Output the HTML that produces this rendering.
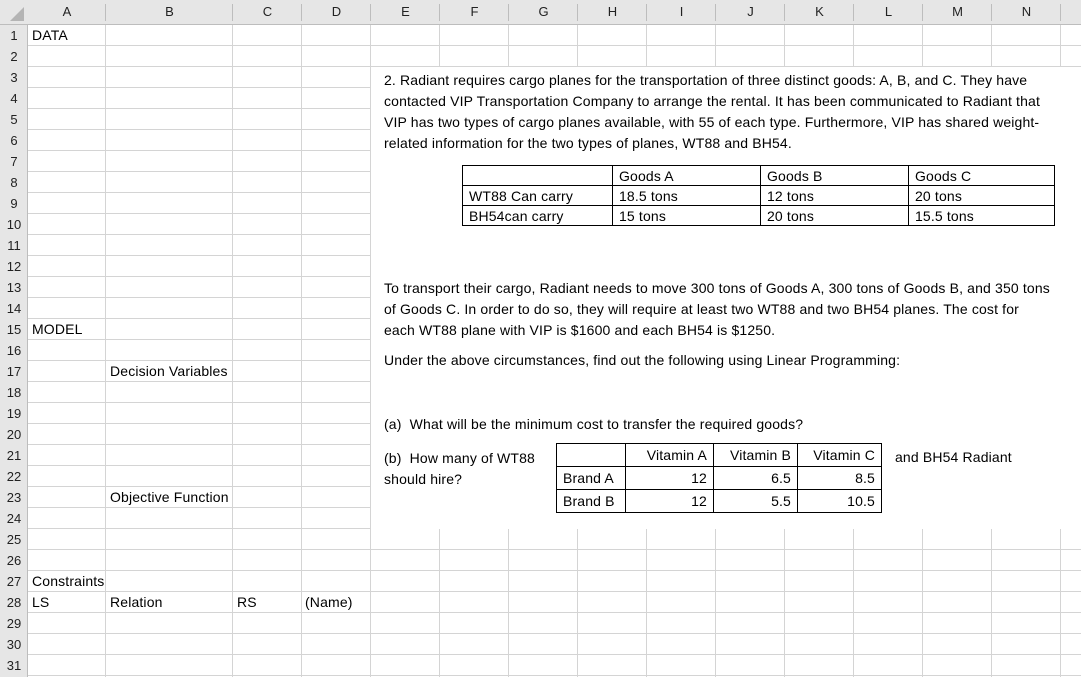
<!DOCTYPE html>
<html><head><style>
*{margin:0;padding:0;box-sizing:border-box}
body{width:1081px;height:677px;overflow:hidden;background:#fff;font-family:"Liberation Sans",Arial,sans-serif;font-size:14px;letter-spacing:0.15px;color:#000;position:relative}
.a{position:absolute;white-space:nowrap}
.v{position:absolute;top:0;width:1px;height:677px;background:#d4d4d4}
.hdr{position:absolute;left:0;top:0;width:1081px;height:25px;background:#e6e6e6;border-bottom:1px solid #bdbdbd}
.rh{position:absolute;left:0;top:25px;width:28px;height:652px;background:#e6e6e6;border-right:1px solid #bdbdbd}
.ch{position:absolute;top:4px;font-size:13px;letter-spacing:0;color:#222;text-align:center}
.rn{position:absolute;left:0;width:28px;text-align:center;font-size:13px;letter-spacing:0;color:#222}
.grid{position:absolute;left:28px;top:25px;width:1053px;height:652px;background:repeating-linear-gradient(to bottom,transparent 0 20px,#d4d4d4 20px 21px)}
table{position:absolute;border-collapse:collapse;font-size:14px}
td{border:1px solid #000;padding:0 6px;height:20px;line-height:18px}
.t2 td{height:23px}
.r{text-align:right}
.c{top:27px}
</style></head><body>
<div class="grid"></div>
<div class="v" style="left:105px"></div>
<div class="v" style="left:232px"></div>
<div class="v" style="left:301px"></div>
<div class="v" style="left:370px"></div>
<div class="v" style="left:439px"></div>
<div class="v" style="left:508px"></div>
<div class="v" style="left:577px"></div>
<div class="v" style="left:646px"></div>
<div class="v" style="left:715px"></div>
<div class="v" style="left:784px"></div>
<div class="v" style="left:853px"></div>
<div class="v" style="left:922px"></div>
<div class="v" style="left:991px"></div>
<div class="v" style="left:1060px"></div>
<div class="hdr"></div>
<svg class="a" style="left:0;top:0" width="28" height="25"><polygon points="24,7 24,21 10,21" fill="#b4b4b4"/></svg>
<div class="a" style="left:105px;top:4px;width:1px;height:17px;background:#bdbdbd"></div>
<div class="a" style="left:232px;top:4px;width:1px;height:17px;background:#bdbdbd"></div>
<div class="a" style="left:301px;top:4px;width:1px;height:17px;background:#bdbdbd"></div>
<div class="a" style="left:370px;top:4px;width:1px;height:17px;background:#bdbdbd"></div>
<div class="a" style="left:439px;top:4px;width:1px;height:17px;background:#bdbdbd"></div>
<div class="a" style="left:508px;top:4px;width:1px;height:17px;background:#bdbdbd"></div>
<div class="a" style="left:577px;top:4px;width:1px;height:17px;background:#bdbdbd"></div>
<div class="a" style="left:646px;top:4px;width:1px;height:17px;background:#bdbdbd"></div>
<div class="a" style="left:715px;top:4px;width:1px;height:17px;background:#bdbdbd"></div>
<div class="a" style="left:784px;top:4px;width:1px;height:17px;background:#bdbdbd"></div>
<div class="a" style="left:853px;top:4px;width:1px;height:17px;background:#bdbdbd"></div>
<div class="a" style="left:922px;top:4px;width:1px;height:17px;background:#bdbdbd"></div>
<div class="a" style="left:991px;top:4px;width:1px;height:17px;background:#bdbdbd"></div>
<div class="a" style="left:1060px;top:4px;width:1px;height:17px;background:#bdbdbd"></div>
<div class="ch" style="left:28px;width:78px">A</div>
<div class="ch" style="left:106px;width:127px">B</div>
<div class="ch" style="left:233px;width:69px">C</div>
<div class="ch" style="left:302px;width:69px">D</div>
<div class="ch" style="left:371px;width:69px">E</div>
<div class="ch" style="left:440px;width:69px">F</div>
<div class="ch" style="left:509px;width:69px">G</div>
<div class="ch" style="left:578px;width:69px">H</div>
<div class="ch" style="left:647px;width:69px">I</div>
<div class="ch" style="left:716px;width:69px">J</div>
<div class="ch" style="left:785px;width:69px">K</div>
<div class="ch" style="left:854px;width:69px">L</div>
<div class="ch" style="left:923px;width:69px">M</div>
<div class="ch" style="left:992px;width:69px">N</div>
<div class="rh"></div>
<div class="rn" style="top:28px">1</div><div class="rn" style="top:49px">2</div><div class="rn" style="top:70px">3</div><div class="rn" style="top:91px">4</div><div class="rn" style="top:112px">5</div><div class="rn" style="top:133px">6</div><div class="rn" style="top:154px">7</div><div class="rn" style="top:175px">8</div><div class="rn" style="top:196px">9</div><div class="rn" style="top:217px">10</div><div class="rn" style="top:238px">11</div><div class="rn" style="top:259px">12</div><div class="rn" style="top:280px">13</div><div class="rn" style="top:301px">14</div><div class="rn" style="top:322px">15</div><div class="rn" style="top:343px">16</div><div class="rn" style="top:364px">17</div><div class="rn" style="top:385px">18</div><div class="rn" style="top:406px">19</div><div class="rn" style="top:427px">20</div><div class="rn" style="top:448px">21</div><div class="rn" style="top:469px">22</div><div class="rn" style="top:490px">23</div><div class="rn" style="top:511px">24</div><div class="rn" style="top:532px">25</div><div class="rn" style="top:553px">26</div><div class="rn" style="top:574px">27</div><div class="rn" style="top:595px">28</div><div class="rn" style="top:616px">29</div><div class="rn" style="top:637px">30</div><div class="rn" style="top:658px">31</div>
<div class="a" style="left:32px;top:27px">DATA</div>
<div class="a" style="left:32px;top:321px">MODEL</div>
<div class="a" style="left:110px;top:363px">Decision Variables</div>
<div class="a" style="left:110px;top:489px">Objective Function</div>
<div class="a" style="left:32px;top:573px">Constraints</div>
<div class="a" style="left:32px;top:594px">LS</div>
<div class="a" style="left:110px;top:594px">Relation</div>
<div class="a" style="left:237px;top:594px">RS</div>
<div class="a" style="left:305px;top:594px">(Name)</div>
<div class="a" style="left:371px;top:67px;width:710px;height:462px;background:#fff"></div>
<div class="a" style="left:384px;top:70px;line-height:21px">2. Radiant requires cargo planes for the transportation of three distinct goods: A, B, and C. They have<br>contacted VIP Transportation Company to arrange the rental. It has been communicated to Radiant that<br>VIP has two types of cargo planes available, with 55 of each type. Furthermore, VIP has shared weight-<br>related information for the two types of planes, WT88 and BH54.</div>
<table style="left:462px;top:165px;width:593px">
<tr><td style="width:150px"></td><td style="width:148px">Goods A</td><td style="width:148px">Goods B</td><td>Goods C</td></tr>
<tr><td>WT88 Can carry</td><td>18.5 tons</td><td>12 tons</td><td>20 tons</td></tr>
<tr><td>BH54can carry</td><td>15 tons</td><td>20 tons</td><td>15.5 tons</td></tr>
</table>
<div class="a" style="left:384px;top:278px;line-height:21px">To transport their cargo, Radiant needs to move 300 tons of Goods A, 300 tons of Goods B, and 350 tons<br>of Goods C. In order to do so, they will require at least two WT88 and two BH54 planes. The cost for<br>each WT88 plane with VIP is $1600 and each BH54 is $1250.</div>
<div class="a" style="left:384px;top:352px">Under the above circumstances, find out the following using Linear Programming:</div>
<div class="a" style="left:384px;top:416px">(a)&nbsp; What will be the minimum cost to transfer the required goods?</div>
<div class="a" style="left:384px;top:448px;line-height:21px">(b)&nbsp; How many of WT88<br>should hire?</div>
<div class="a" style="left:895px;top:449px">and BH54 Radiant</div>
<table class="t2" style="left:556px;top:443px;width:326px">
<tr><td style="width:69px"></td><td class="r" style="width:88px">Vitamin A</td><td class="r" style="width:84px">Vitamin B</td><td class="r">Vitamin C</td></tr>
<tr><td>Brand A</td><td class="r">12</td><td class="r">6.5</td><td class="r">8.5</td></tr>
<tr><td>Brand B</td><td class="r">12</td><td class="r">5.5</td><td class="r">10.5</td></tr>
</table>
</body></html>
